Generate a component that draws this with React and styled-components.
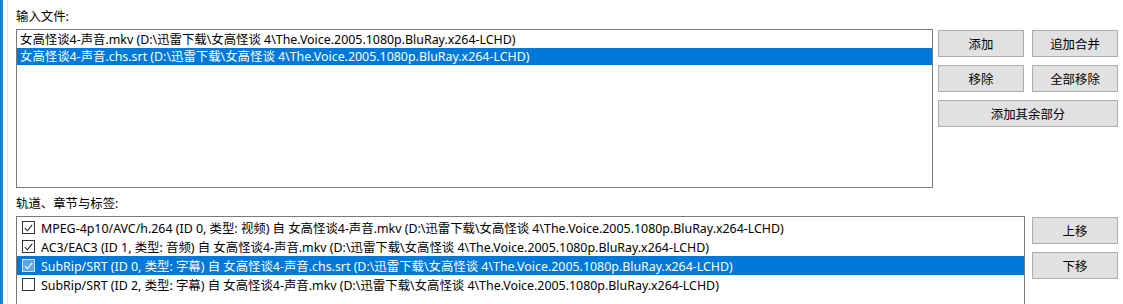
import React from "react";
import styled, { createGlobalStyle } from "styled-components";

const Global = createGlobalStyle`
  html, body { margin: 0; padding: 0; background: #ffffff; }
  body {
    font-family: "Noto Sans", "Noto Sans CJK SC", sans-serif;
    font-size: 12.4px;
    color: #000;
    overflow: hidden;
  }
`;

const Frame = styled.div`
  display: flex;
  width: 1123px;
  height: 304px;
  overflow: hidden;
  background: #fff;
`;

const EdgeStrip = styled.div`
  width: 3px;
  flex: none;
  background: #1b7fd2;
`;

const EdgeLine = styled.div`
  width: 1px;
  flex: none;
  margin-left: 4px;
  background: #e6e6e6;
`;

const Content = styled.div`
  flex: 1;
  padding: 6px 0 0 8px;
  display: flex;
  flex-direction: column;
`;

const Label = styled.div`
  box-sizing: border-box;
  height: 17px;
  padding-top: 2px;
  line-height: 17px;
  margin-top: ${(p) => p.$top || 0}px;
  margin-bottom: 6px;
`;

const Section = styled.div`
  display: flex;
  align-items: flex-start;
`;

const ListBox = styled.div`
  box-sizing: border-box;
  width: ${(p) => p.$width}px;
  height: ${(p) => p.$height}px;
  border: 1px solid #7a7a7a;
  padding-top: 1px;
  background: #fff;
  flex: none;
`;

const FileRow = styled.div`
  height: 17px;
  line-height: 17px;
  padding-left: 3px;
  white-space: nowrap;
  background: ${(p) => (p.$selected ? "#0078d7" : "transparent")};
  color: ${(p) => (p.$selected ? "#fff" : "#000")};
`;

const TrackRow = styled.div`
  height: 19px;
  display: flex;
  align-items: center;
  padding-left: 5px;
  white-space: nowrap;
  background: ${(p) => (p.$selected ? "#0078d7" : "transparent")};
  color: ${(p) => (p.$selected ? "#fff" : "#000")};
`;

const Check = styled.span`
  box-sizing: border-box;
  width: 13px;
  height: 13px;
  flex: none;
  border: 1px solid ${(p) => (p.$selected ? "#cce4f7" : "#333")};
  background: ${(p) => (p.$selected ? "#5ea6e2" : "#fff")};
  display: flex;
  align-items: center;
  justify-content: center;
  margin-right: 6px;
`;

const ButtonCol = styled.div`
  display: flex;
  flex-direction: column;
  gap: 8px;
  margin-left: ${(p) => p.$gap}px;
  margin-top: 1px;
`;

const ButtonRow = styled.div`
  display: flex;
  gap: 8px;
`;

const Button = styled.div`
  box-sizing: border-box;
  width: ${(p) => p.$w}px;
  height: 27px;
  background: #e1e1e1;
  border: 1px solid #adadad;
  display: flex;
  align-items: center;
  justify-content: center;
  font-family: "Noto Sans CJK SC", sans-serif;
`;

const files = [
  "女高怪谈4-声音.mkv (D:\\迅雷下载\\女高怪谈 4\\The.Voice.2005.1080p.BluRay.x264-LCHD)",
  "女高怪谈4-声音.chs.srt (D:\\迅雷下载\\女高怪谈 4\\The.Voice.2005.1080p.BluRay.x264-LCHD)",
];

const tracks = [
  { text: "MPEG-4p10/AVC/h.264 (ID 0, 类型: 视频) 自 女高怪谈4-声音.mkv (D:\\迅雷下载\\女高怪谈 4\\The.Voice.2005.1080p.BluRay.x264-LCHD)", checked: true },
  { text: "AC3/EAC3 (ID 1, 类型: 音频) 自 女高怪谈4-声音.mkv (D:\\迅雷下载\\女高怪谈 4\\The.Voice.2005.1080p.BluRay.x264-LCHD)", checked: true },
  { text: "SubRip/SRT (ID 0, 类型: 字幕) 自 女高怪谈4-声音.chs.srt (D:\\迅雷下载\\女高怪谈 4\\The.Voice.2005.1080p.BluRay.x264-LCHD)", checked: true, selected: true },
  { text: "SubRip/SRT (ID 2, 类型: 字幕) 自 女高怪谈4-声音.mkv (D:\\迅雷下载\\女高怪谈 4\\The.Voice.2005.1080p.BluRay.x264-LCHD)", checked: false },
];

const Tick = ({ color }) => (
  <svg width="9" height="8" viewBox="0 0 9 8">
    <path d="M0.8 4.2 L3.4 6.8 L8.2 0.8" fill="none" stroke={color} strokeWidth="1.1" />
  </svg>
);

export default function App() {
  return (
    <>
      <Global />
      <Frame>
        <EdgeStrip />
        <EdgeLine />
        <Content>
          <Label>输入文件:</Label>
          <Section>
            <ListBox $width={917} $height={159}>
              {files.map((f, i) => (
                <FileRow key={i} $selected={i === 1}>{f}</FileRow>
              ))}
            </ListBox>
            <ButtonCol $gap={5}>
              <ButtonRow>
                <Button $w={86}>添加</Button>
                <Button $w={86}>追加合并</Button>
              </ButtonRow>
              <ButtonRow>
                <Button $w={86}>移除</Button>
                <Button $w={86}>全部移除</Button>
              </ButtonRow>
              <Button $w={180}>添加其余部分</Button>
            </ButtonCol>
          </Section>
          <Label $top={5}>轨道、章节与标签:</Label>
          <Section>
            <ListBox $width={1009} $height={120}>
              {tracks.map((t, i) => (
                <TrackRow key={i} $selected={t.selected}>
                  <Check $selected={t.selected}>
                    {t.checked && <Tick color={t.selected ? "#fff" : "#222"} />}
                  </Check>
                  {t.text}
                </TrackRow>
              ))}
            </ListBox>
            <ButtonCol $gap={7}>
              <Button $w={86}>上移</Button>
              <Button $w={86}>下移</Button>
            </ButtonCol>
          </Section>
        </Content>
      </Frame>
    </>
  );
}
